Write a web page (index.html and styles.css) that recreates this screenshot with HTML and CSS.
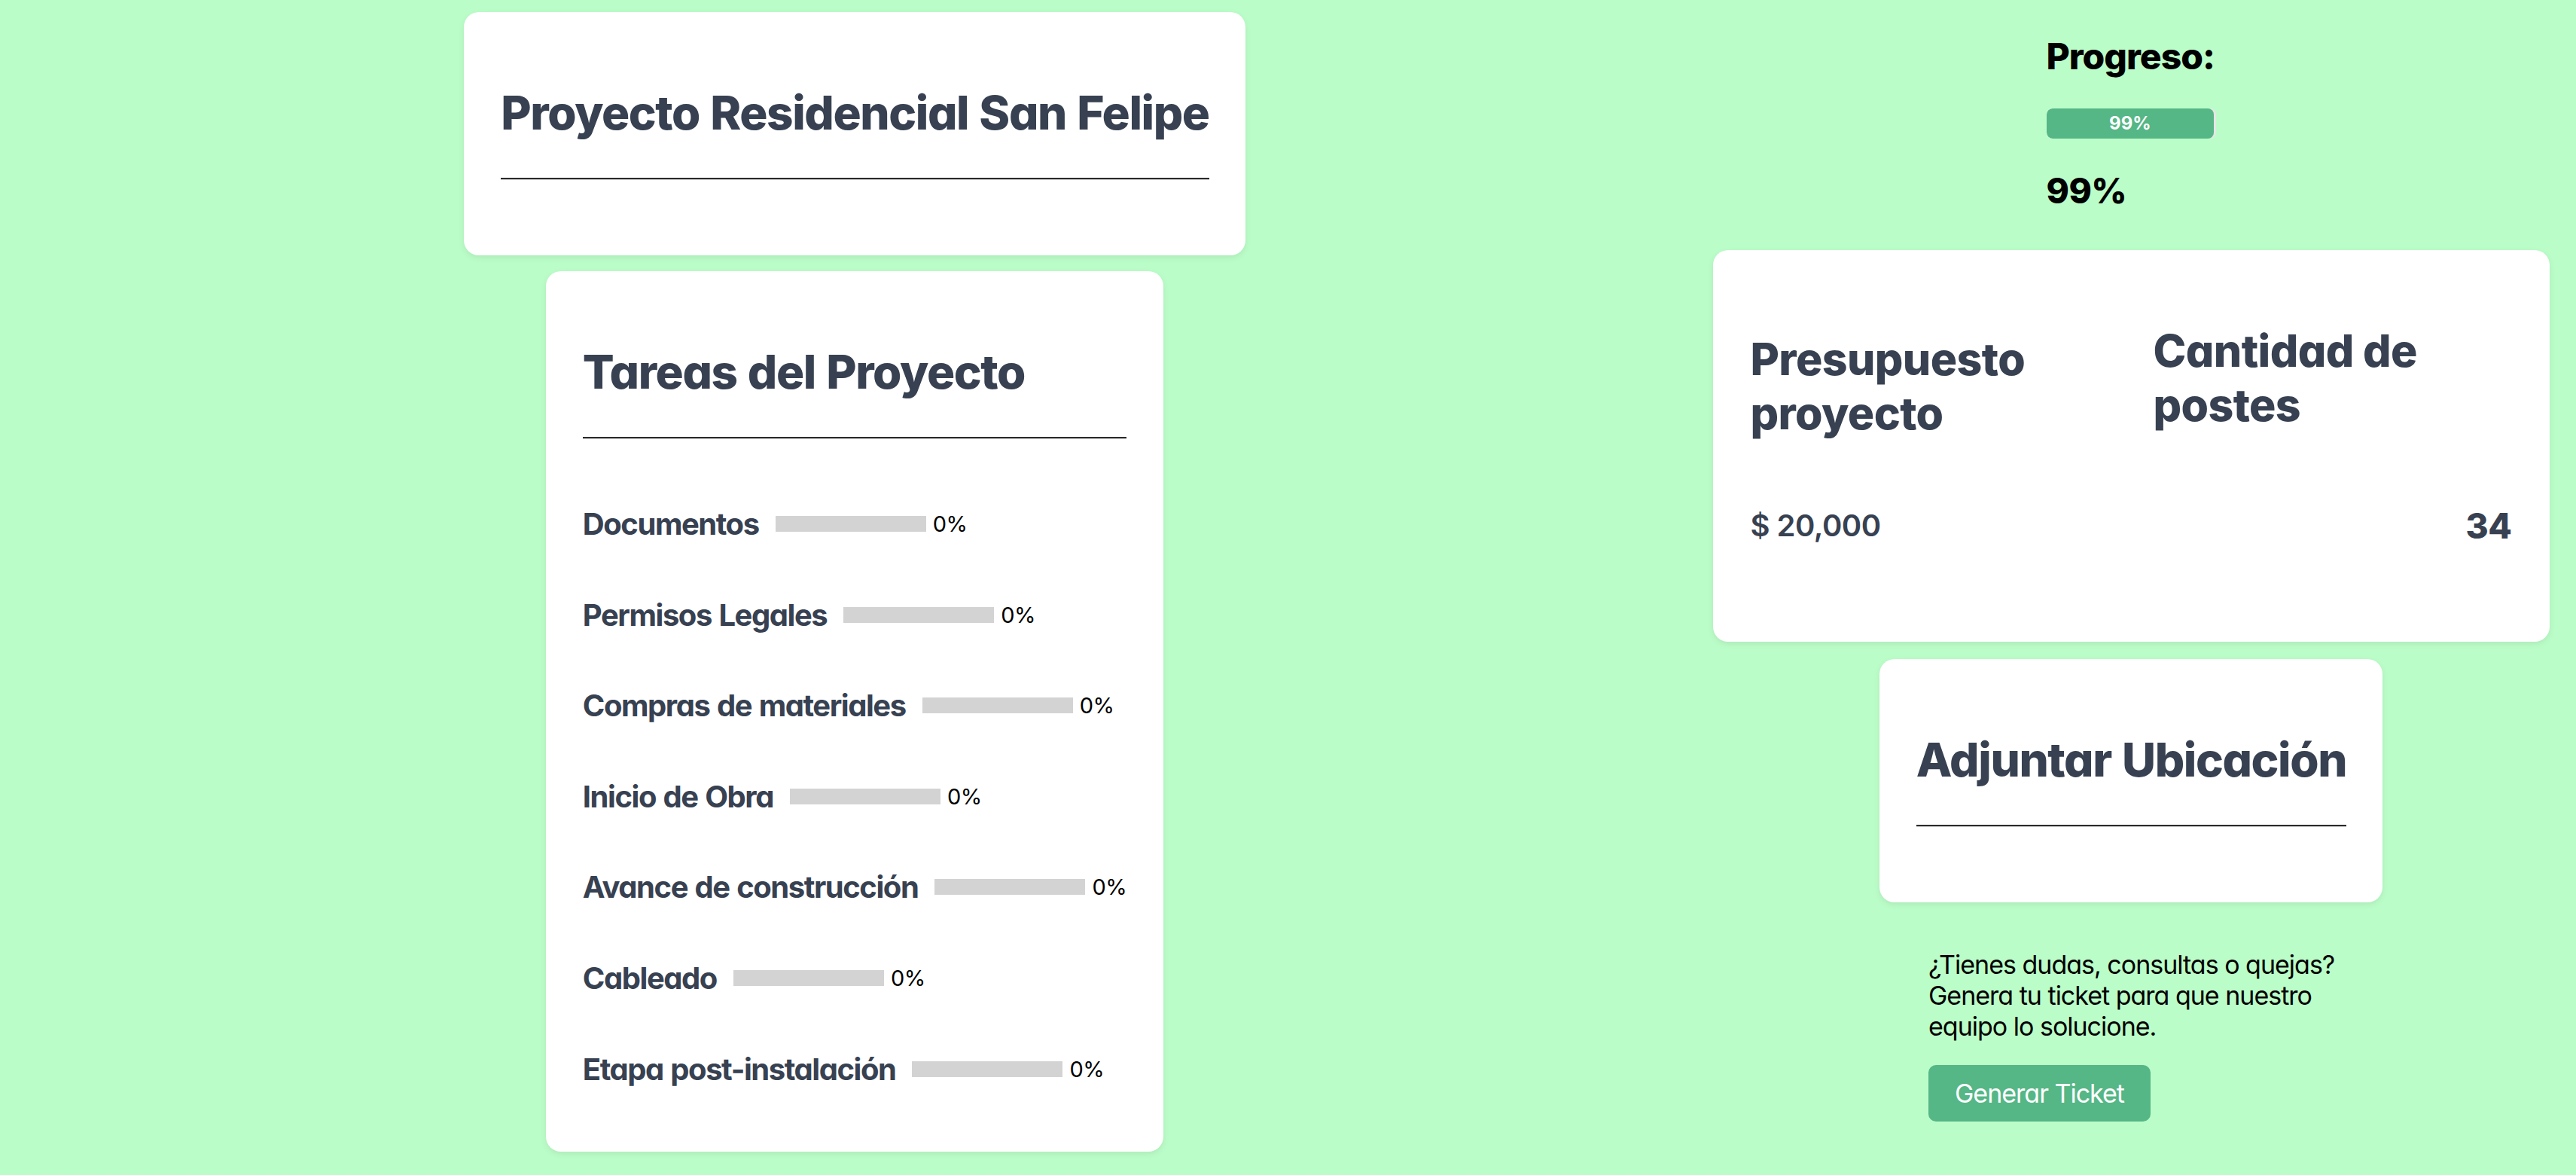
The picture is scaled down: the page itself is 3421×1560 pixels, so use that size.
FILE: index.html
```html
<!DOCTYPE html>
<html lang="es">
<head>
<meta charset="utf-8">
<title>Proyecto Residencial San Felipe</title>
<link rel="stylesheet" href="styles.css">
</head>
<body>
<main class="page">
  <section class="col col-left">
    <div class="card card-header">
      <h1 class="card-title">Proyecto Residencial San Felipe</h1>
      <hr class="rule">
    </div>
    <div class="card card-tasks">
      <h2 class="card-title">Tareas del Proyecto</h2>
      <hr class="rule">
      <ul class="tasks">
        <li class="task"><span class="task-name">Documentos</span><span class="task-bar"><span class="task-fill" style="width:0%"></span></span><span class="task-pct">0%</span></li>
        <li class="task"><span class="task-name">Permisos Legales</span><span class="task-bar"><span class="task-fill" style="width:0%"></span></span><span class="task-pct">0%</span></li>
        <li class="task"><span class="task-name">Compras de materiales</span><span class="task-bar"><span class="task-fill" style="width:0%"></span></span><span class="task-pct">0%</span></li>
        <li class="task"><span class="task-name">Inicio de Obra</span><span class="task-bar"><span class="task-fill" style="width:0%"></span></span><span class="task-pct">0%</span></li>
        <li class="task"><span class="task-name">Avance de construcción</span><span class="task-bar"><span class="task-fill" style="width:0%"></span></span><span class="task-pct">0%</span></li>
        <li class="task"><span class="task-name">Cableado</span><span class="task-bar"><span class="task-fill" style="width:0%"></span></span><span class="task-pct">0%</span></li>
        <li class="task"><span class="task-name">Etapa post-instalación</span><span class="task-bar"><span class="task-fill" style="width:0%"></span></span><span class="task-pct">0%</span></li>
      </ul>
    </div>
  </section>

  <section class="col col-right">
    <div class="progress">
      <h2 class="progress-label">Progreso:</h2>
      <div class="progress-track"><div class="progress-fill" style="width:99%"><span>99%</span></div></div>
      <p class="progress-value">99%</p>
    </div>

    <div class="card card-stats">
      <div class="stat stat-budget">
        <h2 class="stat-title">Presupuesto proyecto</h2>
        <p class="stat-value">$ 20,000</p>
      </div>
      <div class="stat stat-posts">
        <h2 class="stat-title">Cantidad de postes</h2>
        <p class="stat-value stat-value-big">34</p>
      </div>
    </div>

    <div class="card card-location">
      <h2 class="card-title">Adjuntar Ubicación</h2>
      <hr class="rule">
    </div>

    <div class="ticket">
      <p class="ticket-text">¿Tienes dudas, consultas o quejas?<br>Genera tu ticket para que nuestro<br>equipo lo solucione.</p>
      <button class="ticket-btn" type="button">Generar Ticket</button>
    </div>
  </section>
</main>
</body>
</html>
```

FILE: styles.css
```css
* { box-sizing: border-box; }

html, body {
  margin: 0;
  padding: 0;
}

body {
  background: #bbfdc8;
  font-family: Inter, "Noto Sans", "Liberation Sans", sans-serif;
  font-feature-settings: "cv11" 1;
  color: #111;
}

.page {
  display: flex;
  align-items: flex-start;
  width: 3421px;
  height: 1560px;
  overflow: hidden;
}

.col {
  display: flex;
  flex-direction: column;
  align-items: center;
}

.col-left {
  width: 2270px;
  padding-top: 16px;
  gap: 21px;
}

.col-right {
  width: 1120px;
}

/* cards */
.card {
  background: #fff;
  border-radius: 20px;
  box-shadow: 0 3px 8px rgba(0, 0, 0, 0.08);
  width: max-content;
}

.card-title {
  margin: 49px 0;
  font-size: 62px;
  line-height: 74px;
  font-weight: 800;
  color: #374151;
  white-space: nowrap;
  letter-spacing: -1.4px;
  word-spacing: 2px;
}

.rule {
  margin: 0;
  height: 0;
  border: 0;
  border-top: 2px solid #2b2b2b;
  border-bottom: 1px solid #d0d0d0;
}

.card-header,
.card-location {
  padding: 48px 48px 48px 49px;
}

.card-header .rule,
.card-location .rule {
  margin-bottom: 52px;
}

.card-tasks {
  padding: 48px 49px 48px 49px;
}

.tasks {
  list-style: none;
  margin: 90px 0 39px;
  padding: 0;
  display: flex;
  flex-direction: column;
  gap: 75.6px;
}

.task {
  display: flex;
  align-items: center;
  height: 45px;
}

.task-name {
  font-size: 40px;
  line-height: 45px;
  font-weight: 700;
  color: #374151;
  letter-spacing: -1.45px;
  word-spacing: 1.5px;
  white-space: nowrap;
}

.task-bar {
  display: block;
  width: 200px;
  height: 21px;
  margin-left: 22px;
  background: #d3d3d3;
}

.task-fill {
  display: block;
  height: 100%;
  background: #55b686;
}

.task-pct {
  margin-left: 9px;
  font-size: 29px;
  line-height: 45px;
  color: #000;
  letter-spacing: -0.5px;
}

/* progress */
.progress {
  width: 225px;
  margin-top: 46px;
}

.progress-label {
  margin: 0;
  font-size: 48px;
  line-height: 58px;
  font-weight: 800;
  color: #000;
  white-space: nowrap;
  letter-spacing: -1px;
}

.progress-track {
  margin-top: 40px;
  height: 40px;
  border-radius: 8px;
  background: #e6e6e6;
  overflow: hidden;
}

.progress-fill {
  height: 100%;
  border-radius: 8px;
  background: #55b686;
  display: flex;
  align-items: center;
  justify-content: center;
}

.progress-fill span {
  font-size: 24px;
  font-weight: 700;
  color: #fff;
  line-height: 40px;
}

.progress-value {
  margin: 41px 0 0;
  font-size: 46px;
  line-height: 56px;
  font-weight: 800;
  color: #000;
  letter-spacing: -0.5px;
}

/* stats card */
.card-stats {
  margin-top: 51px;
  display: grid;
  grid-template-columns: 476px 476px;
  column-gap: 59px;
  align-items: start;
  padding: 98px 50px 126px;
}

.stat-title {
  margin: 0;
  font-size: 59px;
  line-height: 72px;
  font-weight: 800;
  color: #374151;
  letter-spacing: -0.6px;
}

.stat-budget .stat-title {
  margin-top: 11px;
  width: 400px;
}

.stat-posts .stat-title {
  width: 400px;
}

.stat-value {
  margin: 89px 0 0;
  font-size: 40px;
  line-height: 48px;
  font-weight: 600;
  color: #374151;
  letter-spacing: -0.5px;
}

.stat-value-big {
  margin-top: 96px;
  font-size: 46px;
  line-height: 56px;
  font-weight: 800;
  text-align: right;
}

/* location card */
.card-location {
  margin-top: 23px;
}

/* ticket */
.ticket {
  width: 538px;
  margin-top: 62px;
}

.ticket-text {
  margin: 0;
  font-size: 34px;
  line-height: 41px;
  color: #000;
  white-space: nowrap;
  letter-spacing: -1px;
}

.ticket-btn {
  margin-top: 31px;
  padding: 17px 35px;
  border: 0;
  border-radius: 10px;
  background: #55b686;
  color: #fff;
  font-family: inherit;
  font-feature-settings: "cv11" 1;
  font-size: 34px;
  line-height: 41px;
  letter-spacing: -1px;
  cursor: pointer;
}
```
